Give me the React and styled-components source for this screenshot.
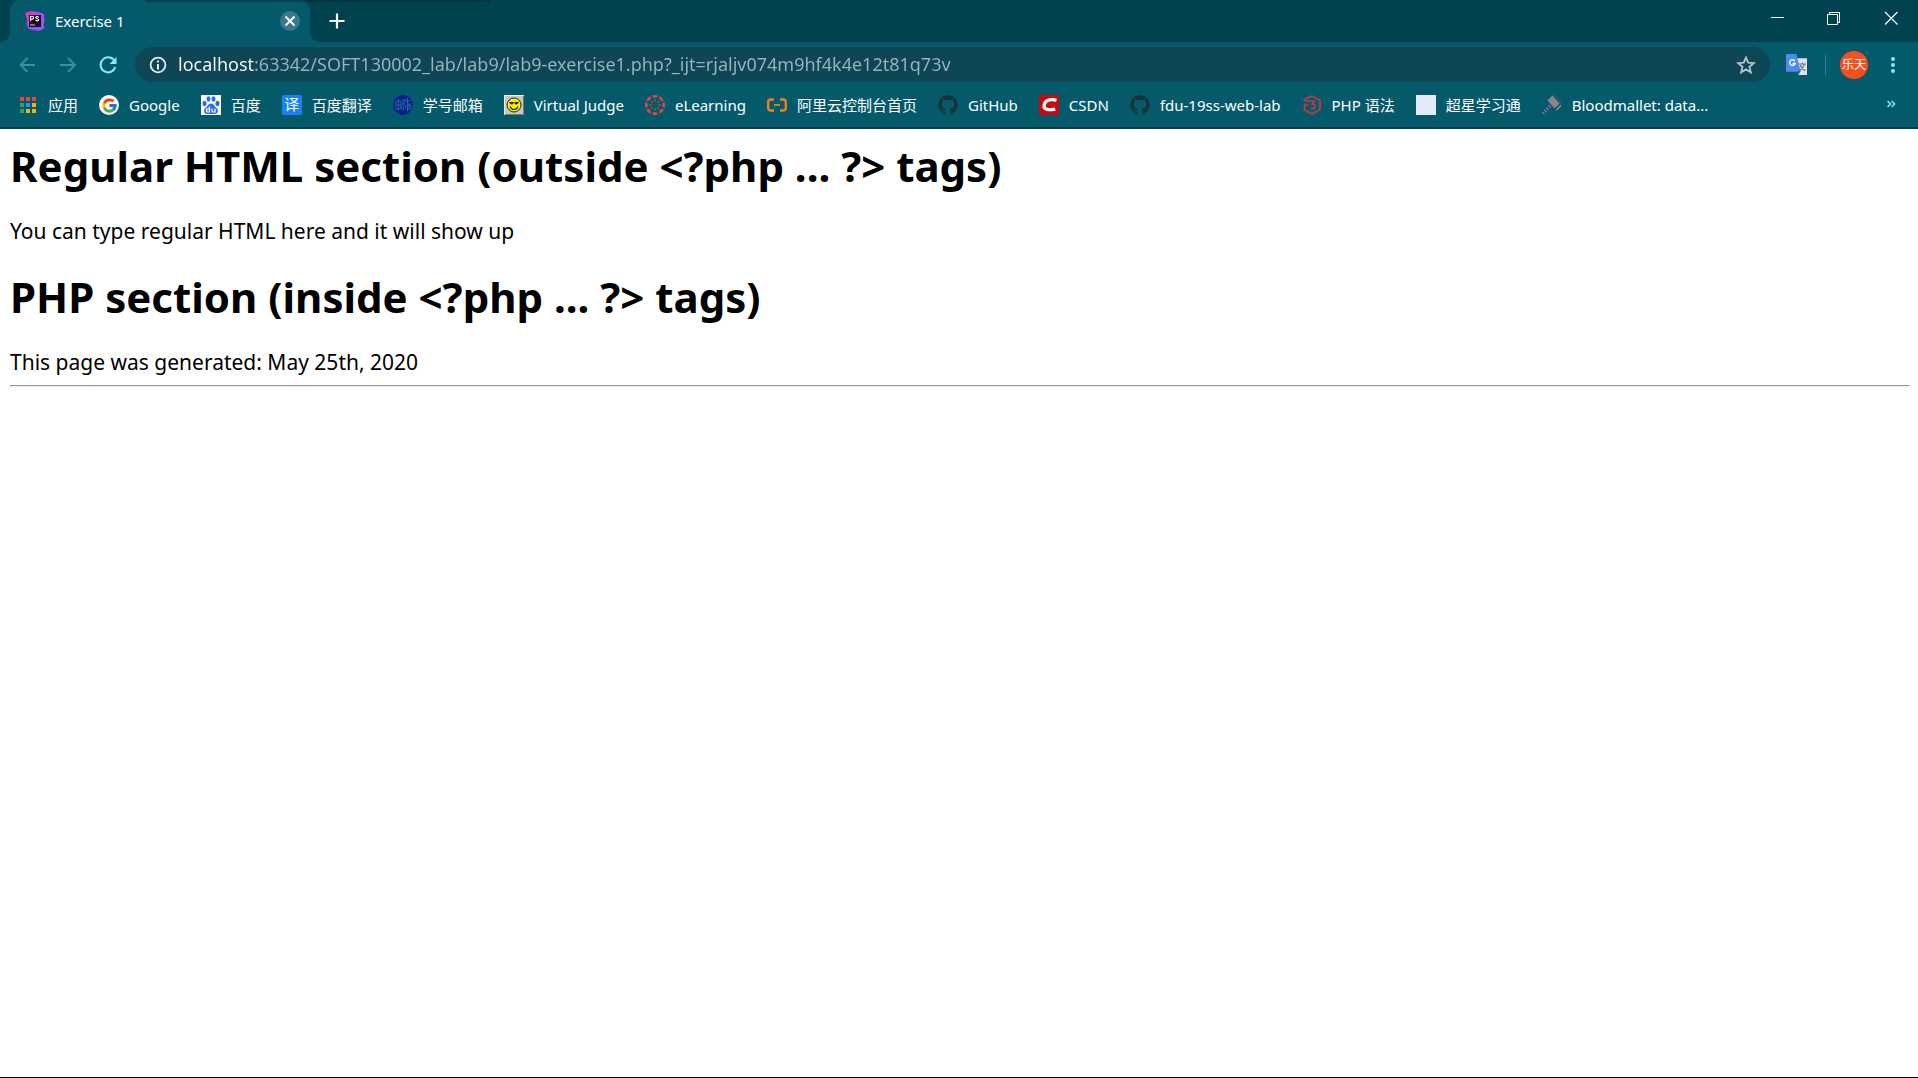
import React from "react";
import styled, { createGlobalStyle } from "styled-components";
import { FaGithub } from "react-icons/fa";
import { FcGoogle } from "react-icons/fc";

const GlobalStyle = createGlobalStyle`
  * { box-sizing: border-box; }
  body { margin: 0; background: #fff; }
`;

const ui = `"Noto Sans", "Noto Sans CJK SC", sans-serif`;

const Window = styled.div`
  display: flex;
  flex-direction: column;
  min-height: 100vh;
  border-bottom: 1px solid #000;
  font-family: ${ui};
`;

const Chrome = styled.header`
  background: #045a6b;
  border-bottom: 2px solid #04404d;
`;

const TabStrip = styled.div`
  position: relative;
  display: flex;
  height: 42px;
  padding-left: 10px;
  background: #00424f;
`;

const TopShadow = styled.div`
  position: absolute;
  top: 0;
  left: 145px;
  width: 345px;
  height: 3px;
  background: linear-gradient(rgba(0, 25, 32, 0.5), rgba(0, 25, 32, 0));
`;

const Tab = styled.div`
  position: relative;
  display: flex;
  align-items: center;
  gap: 10px;
  width: 300px;
  padding: 0 10px 0 15px;
  border-radius: 10px 10px 0 0;
  background: #045a6b;
  color: #fff;
  font-size: 15px;
  line-height: 20px;

  &::before,
  &::after {
    content: "";
    position: absolute;
    bottom: 0;
    width: 10px;
    height: 10px;
  }
  &::before {
    left: -10px;
    background: radial-gradient(circle at 0 0, transparent 10px, #045a6b 10px);
  }
  &::after {
    right: -10px;
    background: radial-gradient(circle at 100% 0, transparent 10px, #045a6b 10px);
  }
`;

const TabTitle = styled.span`
  flex: 1;
`;

const IconButton = styled.button`
  display: flex;
  align-items: center;
  justify-content: center;
  width: ${(p) => p.$w || 40}px;
  height: ${(p) => p.$h || 36}px;
  padding: 0;
  border: 0;
  border-radius: ${(p) => (p.$round ? "50%" : "0")};
  background: ${(p) => p.$bg || "transparent"};
  color: ${(p) => p.$color || "#fff"};
  font: 12px/20px ${ui};
  white-space: nowrap;
`;

const WindowControls = styled.div`
  display: flex;
  margin-left: auto;
`;

const NewTab = styled.div`
  display: flex;
  align-items: center;
  padding-left: 9px;
`;

const Toolbar = styled.div`
  display: flex;
  align-items: center;
  height: 45px;
  padding: 0 0 0 8px;
`;

const AddressBar = styled.label`
  display: flex;
  flex: 1;
  align-items: center;
  gap: 11px;
  height: 35px;
  margin-left: 7px;
  padding: 0 4px 0 14px;
  border-radius: 18px;
  background: #0e4655;
`;

const AddressInput = styled.input`
  flex: 1;
  min-width: 0;
  height: 26px;
  margin-bottom: 2px;
  padding: 0;
  border: 0;
  outline: 0;
  background: linear-gradient(90deg, #fff 77px, #98b5be 77px);
  background-clip: text;
  color: transparent;
  font: 18px/26px ${ui};
`;

const Extensions = styled.div`
  display: flex;
  align-items: center;
  margin-left: 6px;
`;

const Divider = styled.span`
  width: 1px;
  height: 20px;
  margin: 0 14px 0 9px;
  background: #2c8391;
`;

const BookmarkBar = styled.nav`
  display: flex;
  align-items: center;
  gap: 21px;
  height: 40px;
  padding: 0 14px 4px 18px;
`;

const Bookmark = styled.a`
  display: flex;
  align-items: center;
  gap: 10px;
  color: #fff;
  font-size: 15px;
  line-height: 20px;
  text-decoration: none;
  white-space: nowrap;
`;

const Overflow = styled.div`
  margin-left: auto;
`;

const Page = styled.main`
  flex: 1;
  padding: 10px 8px 0 10px;
  color: #000;
  font-size: 21px;
  line-height: 26px;
`;

const Heading = styled.h1`
  margin: 0 0 25px;
  font-size: 42px;
  line-height: 54px;
  font-weight: 700;
`;

const Paragraph = styled.p`
  margin: 0 0 26px;
`;

const Rule = styled.hr`
  height: 2px;
  margin: 10px 0;
  border: 1px solid #eee;
  border-top-color: #9a9a9a;
  border-left-color: #9a9a9a;
`;

const Drawing = styled.svg`
  flex: none;
`;

const Svg = ({ s = 20, children }) => (
  <Drawing width={s} height={s} viewBox="0 0 20 20" fill="none" aria-hidden="true">
    {children}
  </Drawing>
);

const PhpStormIcon = () => (
  <Svg>
    <defs>
      <linearGradient id="storm" x1="0" y1="0" x2="1" y2="1">
        <stop offset="0" stopColor="#fc2f8e" />
        <stop offset=".4" stopColor="#b345f1" />
        <stop offset="1" stopColor="#8a5cff" />
      </linearGradient>
    </defs>
    <path d="M0 2 6 0l7 1 6 2 .5 7-1 4 1 3-5 3-5-1-6-1-2-5 .5-5z" fill="url(#storm)" />
    <path d="M4 4h12v12H4z" fill="#150a18" />
    <path d="M5.500 10V5.500h1.800a1.300 1.300 0 0 1 0 2.700H5.500M13.800 6.200c-1.800-1.200-3.400-.3-2.800.8.500.9 2.700.6 2.700 1.900 0 1.200-2 1.300-3.200.3" stroke="#fff" strokeWidth="1.200" />
    <path d="M5 14h5" stroke="#ddd" />
  </Svg>
);

const CloseIcon = () => (
  <Svg>
    <path d="M5.500 5.500l9 9m0-9l-9 9" stroke="#fff" strokeWidth="2" />
  </Svg>
);

const AppsIcon = () => {
  const colors = ["#e8453c", "#e8453c", "#e8453c", "#2fa463", "#3090f0", "#f4b400", "#2fa463", "#f4b400", "#f4b400"];
  return (
    <Svg>
      {colors.map((c, i) => (
        <rect key={i} x={2 + (i % 3) * 6} y={2 + Math.floor(i / 3) * 6} width="4" height="4" fill={c} />
      ))}
    </Svg>
  );
};

const GoogleBadge = styled.span`
  display: flex;
  align-items: center;
  justify-content: center;
  width: 20px;
  height: 20px;
  border-radius: 50%;
  background: #fff;
`;

const BaiduIcon = () => (
  <Svg>
    <path d="M0 0h20v20H0z" fill="#fff" />
    <g fill="#2f6be8">
      <ellipse cx="3.500" cy="8.500" rx="2" ry="2.800" />
      <ellipse cx="7.500" cy="4" rx="2" ry="2.700" />
      <ellipse cx="12.500" cy="4" rx="2" ry="2.700" />
      <ellipse cx="16.500" cy="8.500" rx="2" ry="2.800" />
      <path d="M10 8.500c3 0 3.500 3 5.500 4.500 2.500 2 1.500 6-1.500 6H6c-3 0-4-4-1.500-6C6.500 11.500 7 8.500 10 8.500z" />
    </g>
    <path d="M8.500 11.500v5.500H7a1.600 1.600 0 0 1 0-3.200h1.500M11 13.500v2.500q0 1 1 1h2v-3.500" stroke="#fff" strokeWidth="1.200" />
  </Svg>
);

const TranslateBadge = styled.span`
  width: 20px;
  height: 20px;
  border-radius: 2px;
  background: #1a82f0;
  color: #fff;
  font-size: 15px;
  line-height: 19px;
  text-align: center;
`;

const MailIcon = () => (
  <Svg>
    <circle cx="10" cy="10" r="10" fill="#04208e" />
    <path
      d="M3 6h5v8H3zM3 10h5M5.500 4v11M10 4v12M10 5h3l-2 4 2 2-1 3M14.500 3v13M13 6h5M14 10h4v5M16 8v7"
      stroke="#2b6796"
    />
  </Svg>
);

const JudgeIcon = () => (
  <Svg>
    <path d="M0 0h20v20H0z" fill="#c8c8c0" />
    <path d="M.5 19.500V.5h19" stroke="#f0f0ea" />
    <path d="M1 19.500h18.500V1" stroke="#77776f" />
    <circle cx="10" cy="10" r="7" fill="#fff200" stroke="#222" />
    <path d="M5 7h4.500v1.500a2 2 0 0 1-3.500 0zM10.500 7H15l-1 1.500a2 2 0 0 1-3.500 0z" fill="#222" />
    <path d="M6 11.500c1.500 4 6.500 4 8 0" stroke="#222" strokeWidth="1.200" />
  </Svg>
);

const CanvasIcon = () => (
  <Svg>
    {Array.from({ length: 8 }, (_, i) => (
      <g key={i} transform={`rotate(${i * 45} 10 10)`} fill="#e2453d">
        <path d="M6.900.5a10 10 0 0 1 6.200 0A3.200 3.200 0 0 1 6.900.5z" />
        <circle cx="10" cy="5.500" r=".9" />
      </g>
    ))}
  </Svg>
);

const AliIcon = () => (
  <Svg>
    <path d="M7 4.500H4Q1.200 4.500 1.200 7v6Q1.200 15.500 4 15.500h3M13 4.500h3q2.800 0 2.800 2.500v6q0 2.500-2.800 2.500h-3" stroke="#f0801a" strokeWidth="2.400" />
    <path d="M7 10h6" stroke="#f0801a" strokeWidth="1.800" />
  </Svg>
);

const CsdnIcon = () => (
  <Svg>
    <path d="M0 0h20v20H0z" fill="#c80a10" />
    <path d="M17.500 5.300c-5-1.300-11-.8-12.300 4.300-1.200 5 4 6 11 4.500" stroke="#fff" strokeWidth="3.200" />
  </Svg>
);

const PhpSyntaxIcon = () => (
  <Svg>
    <path d="M1.500 5 10 1l8 4.500v9L10 19l-7.500-4V9M1.500 5l6 1.500M2.500 9l4 1.500" stroke="#c53a41" strokeWidth="1.700" />
    <path d="M7.500 6h5l-2.500 3c5 0 3.500 5.500-1.500 5" stroke="#c53a41" strokeWidth="1.500" />
  </Svg>
);

const BlankIcon = styled.span`
  width: 20px;
  height: 20px;
  background: #e3e9f6;
`;

const MalletIcon = () => (
  <Svg>
    <path d="M1 18.500 10 9" stroke="#27477e" strokeWidth="3.500" />
    <path d="M1 18.500 10 9" stroke="#7595bd" strokeWidth="3.500" strokeDasharray="1 2" />
    <path d="M5.500 5.500 10.500.5l7 8-5 5z" fill="#8b858d" />
    <path d="m10.500.5 3 1 5.500 7-1.500 1M5.500 5.500l7 8" stroke="#5a555e" />
    <path d="m14.500 15 4.500-4.500" stroke="#b98a80" strokeWidth="1.500" />
  </Svg>
);

const GTranslateIcon = () => (
  <Svg s={21}>
    <path d="M8 4h12v16h-8z" fill="#dfe3e8" />
    <path d="M1 0h9l4 17H1q-1 0-1-1V1q0-1 1-1z" fill="#4b8bf4" />
    <path d="M11 16h3l-2 4z" fill="#2e55b8" />
    <path d="M8.500 6.700A2.700 2.700 0 1 0 8.800 9H6.300" stroke="#fff" strokeWidth="1.300" />
    <path d="M12.500 9.500H19M15.700 8v1.500M17.500 9.500q-1 4-4.500 6M13.500 10.500q1.500 4 5 5.500" stroke="#68717c" />
  </Svg>
);

const bookmarks = [
  ["应用", <AppsIcon />],
  ["Google", <GoogleBadge><FcGoogle size={17} /></GoogleBadge>],
  ["百度", <BaiduIcon />],
  ["百度翻译", <TranslateBadge aria-hidden="true">译</TranslateBadge>],
  ["学号邮箱", <MailIcon />],
  ["Virtual Judge", <JudgeIcon />],
  ["eLearning", <CanvasIcon />],
  ["阿里云控制台首页", <AliIcon />],
  ["GitHub", <FaGithub size={20} color="#1d303a" />],
  ["CSDN", <CsdnIcon />],
  ["fdu-19ss-web-lab", <FaGithub size={20} color="#1d303a" />],
  ["PHP 语法", <PhpSyntaxIcon />],
  ["超星学习通", <BlankIcon />],
  ["Bloodmallet: data...", <MalletIcon />],
];

export default function App() {
  return (
    <Window>
      <GlobalStyle />
      <Chrome>
        <TabStrip>
          <Tab>
            <PhpStormIcon />
            <TabTitle>Exercise 1</TabTitle>
            <IconButton $w={20} $h={20} $round $bg="#387888" aria-label="Close tab">
              <CloseIcon />
            </IconButton>
          </Tab>
          <NewTab>
            <IconButton aria-label="New tab" $w={36}>
              <Svg>
                <path d="M10 2.500v15M2.500 10h15" stroke="#fff" strokeWidth="2.200" />
              </Svg>
            </IconButton>
          </NewTab>
          <WindowControls>
            <IconButton $w={57} aria-label="Minimize">
              <Svg><path d="M5 9.500h13" stroke="#fff" /></Svg>
            </IconButton>
            <IconButton $w={57} aria-label="Restore">
              <Svg><path d="M4.500 6.500h10v10h-10zM6.500 6.500v-2h10v10h-2" stroke="#fff" /></Svg>
            </IconButton>
            <IconButton $w={57} aria-label="Close window">
              <Svg><path d="m5 4 12.500 12.500m0-12.500L5 16.500" stroke="#fff" strokeWidth="1.200" /></Svg>
            </IconButton>
          </WindowControls>
          <TopShadow />
        </TabStrip>
        <Toolbar>
          <IconButton $color="#3b919d" aria-label="Back">
            <Svg><path d="M17 10H2.500m7-7-7 7 7 7" stroke="currentColor" strokeWidth="1.800" /></Svg>
          </IconButton>
          <IconButton $color="#3b919d" aria-label="Forward">
            <Svg><path d="M2 10h15m-7-7 7 7-7 7" stroke="currentColor" strokeWidth="1.800" /></Svg>
          </IconButton>
          <IconButton $color="#8de9ee" aria-label="Reload">
            <Svg>
              <path d="M16 5.200A7.500 7.500 0 1 0 17.300 12" stroke="currentColor" strokeWidth="2" />
              <path d="M18.500 2v7h-7z" fill="currentColor" />
            </Svg>
          </IconButton>
          <AddressBar>
            <Svg s={18}>
              <circle cx="10" cy="10" r="8.200" stroke="#e3edf1" strokeWidth="2" />
              <path d="M10 9v6M10 5v2.200" stroke="#e3edf1" strokeWidth="2.200" />
            </Svg>
            <AddressInput
              aria-label="Address"
              defaultValue="localhost:63342/SOFT130002_lab/lab9/lab9-exercise1.php?_ijt=rjaljv074m9hf4k4e12t81q73v"
            />
            <IconButton aria-label="Bookmark this page" $color="#b5c6cc">
              <Svg>
                <path d="m10 2.500 2.200 5.200 5.600.5-4.300 3.700 1.300 5.500-4.800-3-4.800 3 1.300-5.500-4.300-3.700 5.600-.5z" stroke="currentColor" strokeWidth="1.800" />
              </Svg>
            </IconButton>
          </AddressBar>
          <Extensions>
            <IconButton aria-label="Translate"><GTranslateIcon /></IconButton>
            <Divider />
            <IconButton $w={28} $h={28} $round $bg="#f4511e">乐天</IconButton>
            <IconButton $w={50} aria-label="Menu" $color="#8de9ee">
              <Svg>
                <g fill="currentColor">
                  <circle cx="10" cy="4" r="2" />
                  <circle cx="10" cy="10" r="2" />
                  <circle cx="10" cy="16" r="2" />
                </g>
              </Svg>
            </IconButton>
          </Extensions>
        </Toolbar>
        <BookmarkBar>
          {bookmarks.map(([label, icon]) => (
            <Bookmark href="#" key={label}>
              {icon}
              {label}
            </Bookmark>
          ))}
          <Overflow>
            <IconButton $w={26} $h={20} $color="#8de9ee" aria-label="More bookmarks">
              <Svg>
                <path d="m6.500 6 3 3-3 3m4-6 3 3-3 3" stroke="currentColor" strokeWidth="1.500" />
              </Svg>
            </IconButton>
          </Overflow>
        </BookmarkBar>
      </Chrome>
      <Page>
        <Heading>Regular HTML section (outside &lt;?php ... ?&gt; tags)</Heading>
        <Paragraph>You can type regular HTML here and it will show up</Paragraph>
        <Heading>PHP section (inside &lt;?php ... ?&gt; tags)</Heading>
        <div>This page was generated: May 25th, 2020</div>
        <Rule />
      </Page>
    </Window>
  );
}
